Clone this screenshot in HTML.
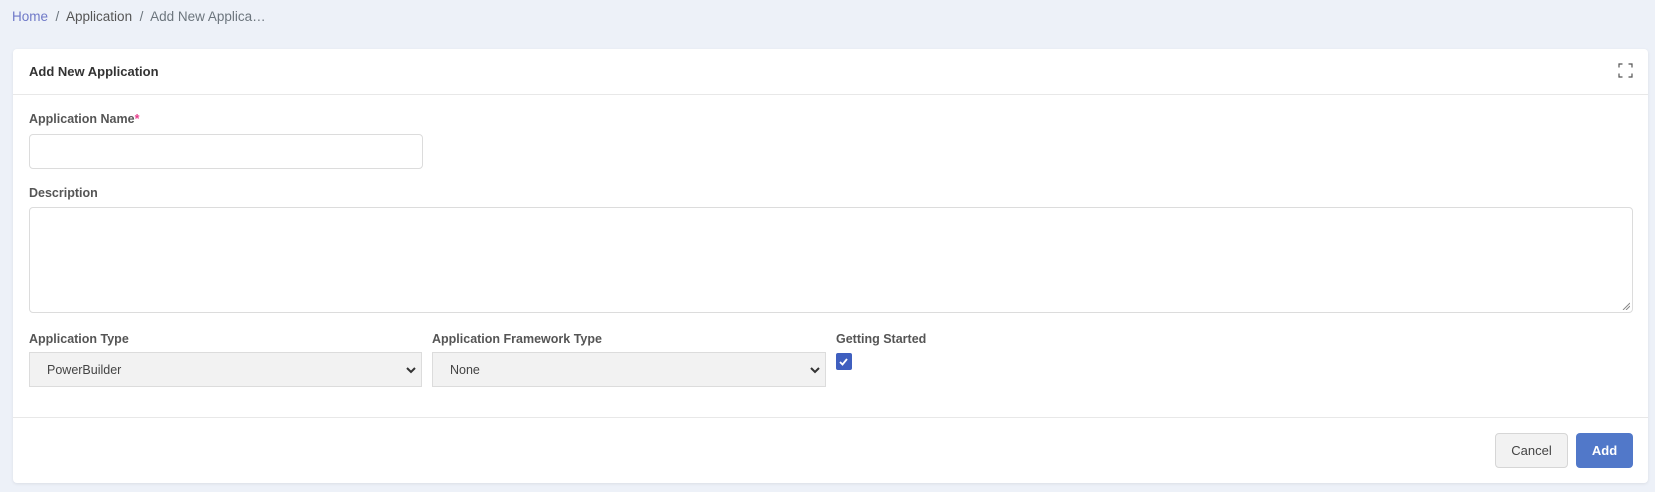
<!DOCTYPE html>
<html><head><style>
body{margin:0;width:1655px;height:492px;background:#edf1f8;font-family:"Liberation Sans",sans-serif;position:relative;overflow:hidden}
.a{position:absolute}
.bc{left:12px;top:9px;font-size:13.5px;color:#6c757d}
.bc .h{color:#6f79c8}
.card{left:13px;top:49px;width:1635px;height:434px;background:#fff;border-radius:4px;box-shadow:0 1px 3px rgba(0,0,0,.08)}
.lbl{font-size:12.5px;font-weight:bold;color:#555}
.inp{border:1px solid #dcdcdc;border-radius:4px;background:#fff;box-sizing:border-box}
.sel{background:#f2f2f2;border:1px solid #dcdcdc;box-sizing:border-box;font-size:12.5px;color:#444;padding:10px 17px}
.line{height:1px;background:#e8e8e8;left:13px;width:1635px}
</style></head><body>
<div class="a bc"><span class="h">Home</span> &nbsp;/&nbsp; <span style="color:#555">Application</span> &nbsp;/&nbsp; Add New Applica…</div>
<div class="a card"></div>
<div class="a" style="left:29px;top:64px;font-size:13px;font-weight:bold;color:#333">Add New Application</div>
<svg class="a" style="left:1618px;top:63px" width="15" height="15" viewBox="0 0 15 15" fill="none" stroke="#555" stroke-width="1.2"><path d="M1 4.5V1H4.5M10.5 1H14V4.5M14 10.5V14H10.5M4.5 14H1V10.5"/></svg>
<div class="a line" style="top:94px"></div>
<div class="a lbl" style="left:29px;top:112px">Application Name<span style="color:#e83e8c">*</span></div>
<div class="a inp" style="left:29px;top:134px;width:394px;height:35px"></div>
<div class="a lbl" style="left:29px;top:186px">Description</div>
<div class="a inp" style="left:29px;top:207px;width:1604px;height:106px"></div>
<svg class="a" style="left:1622px;top:302px" width="8" height="8" stroke="#888"><path d="M1 8L8 1M4 8L8 4"/></svg>
<div class="a lbl" style="left:29px;top:332px">Application Type</div>
<div class="a lbl" style="left:432px;top:332px">Application Framework Type</div>
<div class="a lbl" style="left:836px;top:332px">Getting Started</div>
<div class="a sel" style="left:29px;top:352px;width:393px;height:35px">PowerBuilder</div>
<div class="a sel" style="left:432px;top:352px;width:394px;height:35px">None</div>
<svg class="a" style="left:406px;top:366px" width="10" height="8"><path d="M1 2L5 6L9 2" stroke="#333" stroke-width="2" fill="none"/></svg>
<svg class="a" style="left:810px;top:366px" width="10" height="8"><path d="M1 2L5 6L9 2" stroke="#333" stroke-width="2" fill="none"/></svg>
<div class="a" style="left:836px;top:353px;width:16px;height:17px;background:#3f5fbf;border-radius:2px"></div>
<svg class="a" style="left:838px;top:357px" width="11" height="10"><path d="M2 5L4.5 7.5L9 2" stroke="#fff" stroke-width="1.8" fill="none"/></svg>
<div class="a line" style="top:417px"></div>
<div class="a" style="left:1495px;top:433px;width:73px;height:35px;box-sizing:border-box;border:1px solid #d6d6d6;background:#f2f2f2;border-radius:4px;font-size:13px;color:#444;text-align:center;line-height:33px">Cancel</div>
<div class="a" style="left:1576px;top:433px;width:57px;height:35px;background:#5178c9;border-radius:4px;font-size:13px;color:#fff;text-align:center;line-height:35px;font-weight:bold">Add</div>
</body></html>
